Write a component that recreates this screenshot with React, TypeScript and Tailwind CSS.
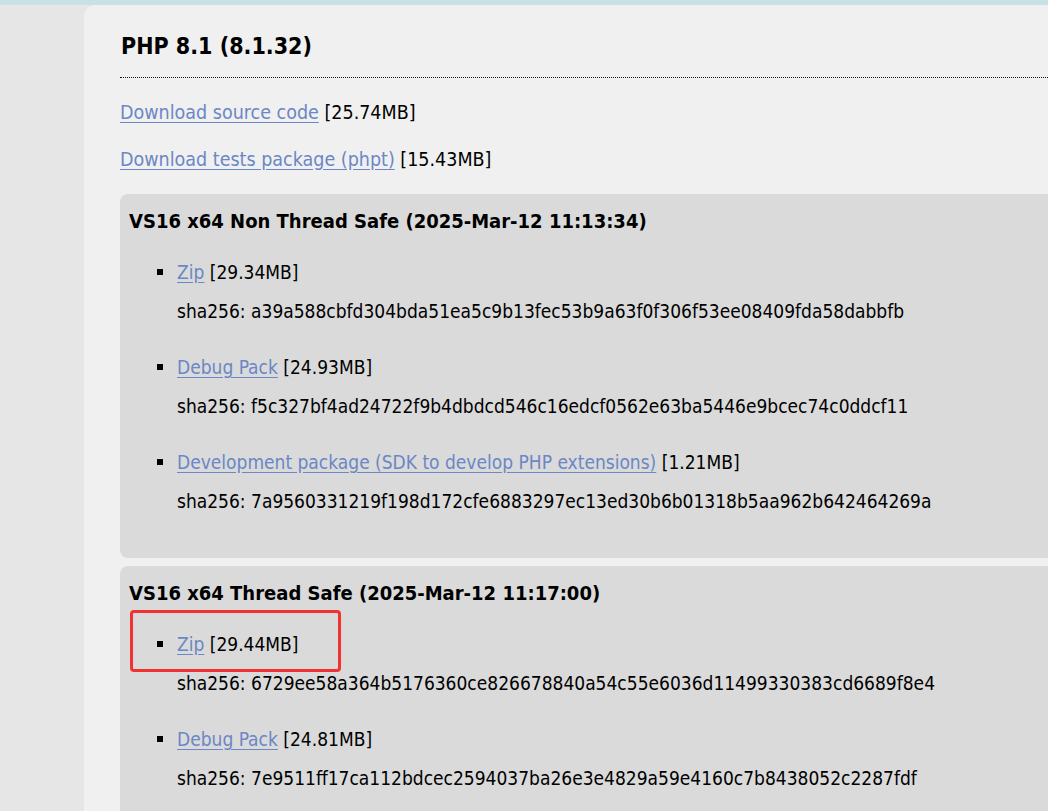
const FONT = "font-['DejaVu_Sans_Condensed','DejaVu_Sans',sans-serif]"

type Item = { label: string; size: string; sha: string }

const NTS: Item[] = [
  { label: 'Zip', size: '29.34MB', sha: 'a39a588cbfd304bda51ea5c9b13fec53b9a63f0f306f53ee08409fda58dabbfb' },
  { label: 'Debug Pack', size: '24.93MB', sha: 'f5c327bf4ad24722f9b4dbdcd546c16edcf0562e63ba5446e9bcec74c0ddcf11' },
  {
    label: 'Development package (SDK to develop PHP extensions)',
    size: '1.21MB',
    sha: '7a9560331219f198d172cfe6883297ec13ed30b6b01318b5aa962b642464269a',
  },
]

const TS: Item[] = [
  { label: 'Zip', size: '29.44MB', sha: '6729ee58a364b5176360ce826678840a54c55e6036d11499330383cd6689f8e4' },
  { label: 'Debug Pack', size: '24.81MB', sha: '7e9511ff17ca112bdcec2594037ba26e3e4829a59e4160c7b8438052c2287fdf' },
]

function DlLink({ children }: { children: React.ReactNode }) {
  return (
    <a href="#" className="text-[#6b87c5] underline decoration-[#6b87c5] underline-offset-[3px]">
      {children}
    </a>
  )
}

function Build({ title, items, highlight }: { title: string; items: Item[]; highlight?: boolean }) {
  return (
    <div className="relative rounded-l-[8px] bg-[#dadada] pl-[9px] pt-[15px] pb-[45px]">
      <h3 className="h-6 font-bold text-[20px] leading-6 whitespace-nowrap">{title}</h3>
      {highlight && (
        <div className="absolute left-[10px] top-[44px] w-[211px] h-[62px] border-[3px] border-[#f23131] rounded-[4px]" />
      )}
      <ul className="mt-[27px] pl-[48px] flex flex-col gap-[32px]">
        {items.map((it) => (
          <li key={it.label} className="relative">
            <span className="absolute -left-[20px] top-[9px] w-[6px] h-[6px] bg-black" />
            <div className="h-6 leading-6 whitespace-nowrap">
              <DlLink>{it.label}</DlLink> [{it.size}]
            </div>
            <div className="mt-[15px] h-6 leading-6 whitespace-nowrap">sha256: {it.sha}</div>
          </li>
        ))}
      </ul>
    </div>
  )
}

export default function App() {
  return (
    <div className={`${FONT} h-[811px] overflow-hidden bg-[#e6e6e6] border-t-[5px] border-[#c9e0e4] text-[19px] text-black`}>
      <div className="ml-[84px] h-full rounded-tl-[12px] bg-[#f0f0f0] pl-[36px]">
        <h2 className="pt-[27px] pl-px h-[73px] font-bold text-[23px] leading-7 border-b border-dotted border-[#111] whitespace-nowrap">
          PHP 8.1 (8.1.32)
        </h2>
        <p className="mt-[23px] h-6 leading-6 text-[19.5px] whitespace-nowrap">
          <DlLink>Download source code</DlLink> [25.74MB]
        </p>
        <p className="mt-[23px] h-6 leading-6 text-[19.5px] whitespace-nowrap">
          <DlLink>Download tests package (phpt)</DlLink> [15.43MB]
        </p>
        <div className="mt-[22px] flex flex-col gap-2">
          <Build title="VS16 x64 Non Thread Safe (2025-Mar-12 11:13:34)" items={NTS} />
          <Build title="VS16 x64 Thread Safe (2025-Mar-12 11:17:00)" items={TS} highlight />
        </div>
      </div>
    </div>
  )
}
